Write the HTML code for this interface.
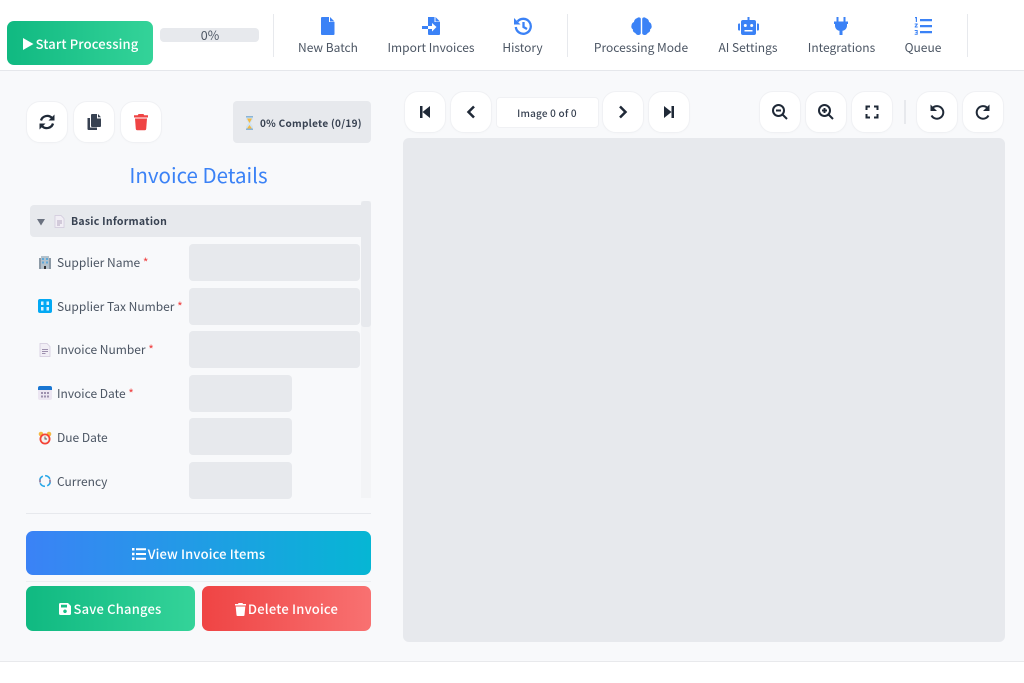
<!DOCTYPE html>
<html><head><meta charset="utf-8"><style>
html,body{margin:0;padding:0;width:1024px;height:683px;overflow:hidden;background:#fff}
body{position:relative;font-family:"Noto Sans CJK JP","Liberation Sans",sans-serif;color:#4b5563}
.a{position:absolute}
.t{position:absolute;white-space:nowrap;line-height:16px}
.c{transform:translateX(-50%)}
.g{background:#e7e9ed}
.ib{position:absolute;width:40px;height:40px;background:#fff;border:1px solid #f0f1f4;border-radius:14px;box-shadow:0 1px 2px rgba(0,0,0,.015)}
.ib svg{position:absolute;left:11px;top:11px;width:18px;height:18px}
.nav{position:absolute;top:17px;width:18px;height:18px;fill:#3b82f6}
.nt{position:absolute;top:39.500px;font-size:12px;color:#4b5563;transform:translateX(-50%);white-space:nowrap;line-height:16px}
.btn{position:absolute;color:#fff;font-weight:500;font-size:13px;text-align:center;border-radius:7px;letter-spacing:.2px}
.lb{position:absolute;left:57px;font-size:12px;line-height:16px;white-space:nowrap;color:#4b5563}
.lb i{color:#ef4444;font-style:normal}
.em{position:absolute;left:38px;width:14px;height:14px}
.in{position:absolute;left:189px;background:#e7e9ed;border-radius:4px;height:37px}
</style></head><body>
<div class="a" style="left:0;top:70px;width:1024px;height:1px;background:#e5e7eb"></div>
<div class="a" style="left:0;top:71px;width:1024px;height:590px;background:#f8f9fb"></div>
<div class="a" style="left:0;top:661px;width:1024px;height:1px;background:#e8e9ec"></div>

<div class="btn" style="left:7px;top:21px;width:146px;height:44px;line-height:46px;letter-spacing:.15px;background:linear-gradient(90deg,#10b981,#34d399)"><svg style="width:12px;height:14px;vertical-align:-2px;margin-right:2px" viewBox="0 0 12 14"><path d="M1 1v12l10.500-6z" fill="#fff"/></svg>Start Processing</div>
<div class="a g" style="left:160px;top:28px;width:99px;height:14px;border-radius:4px"></div>
<div class="t c" style="left:210px;top:27px;font-size:12.500px;color:#4b5563">0%</div>
<div class="a g" style="left:273px;top:14px;width:1px;height:43px"></div>
<div class="a g" style="left:567px;top:14px;width:1px;height:43px"></div>
<div class="a g" style="left:967px;top:14px;width:1px;height:43px"></div>

<svg class="nav" style="left:319px" viewBox="0 0 18 18"><path d="M3 0h7v5h5.500v12a1 1 0 0 1-1 1H3a1 1 0 0 1-1-1V1a1 1 0 0 1 1-1zM11 0l4.500 4.500H11z"/></svg>
<div class="nt" style="left:328px">New Batch</div>
<svg class="nav" style="left:422px" viewBox="0 0 18 18"><path d="M6 0h6.500v5H18v12a1 1 0 0 1-1 1H7a1 1 0 0 1-1-1v-5h4v2.500L14.500 10 10 6v3H6zM13.500 0L18 4.500h-4.500z M0 9h6v3H0z"/><path d="M7 9.500h4v-2l3 2.500-3 2.500v-2H7z" fill="#fff"/></svg>
<div class="nt" style="left:431px">Import Invoices</div>
<svg class="nav" style="left:514px;fill:none;stroke:#3b82f6;stroke-width:2.300" viewBox="0 0 18 18"><path d="M3.500 4.500A7.500 7.500 0 1 1 1.800 10M9.500 5v5l3.500 2"/><path d="M0 1v6.500h6.500z" fill="#3b82f6" stroke="none"/></svg>
<div class="nt" style="left:522.500px">History</div>
<svg class="nav" style="left:630.500px;width:21px" viewBox="0 0 21 18"><path d="M9.800 2v14c0 1.500-1.500 2-2.500 2-1.500 0-2.500-1-3-2C2.500 15.500 1.500 14 2 12.500 .5 11.500 0 10 .5 8.500 .5 7 1.500 5.500 3 5 3 3 4.500 1.500 6 1.200 7 0 9.800 0 9.800 2zM11.200 2v14c0 1.500 1.500 2 2.500 2 1.500 0 2.500-1 3-2 1.800-.5 2.800-2 2.300-3.500 1.500-1 2-2.500 1.500-4 0-1.500-1-3-2.500-3.500 0-2-1.500-3.500-3-3.800-1-1.200-3.800-1.200-3.800.8z"/></svg>
<div class="nt" style="left:641px">Processing Mode</div>
<svg class="nav" style="left:738px;width:21px" viewBox="0 0 21 18"><path d="M9.500 0h2v3h4.500a2 2 0 0 1 2 2v11a2 2 0 0 1-2 2H5a2 2 0 0 1-2-2V5a2 2 0 0 1 2-2h4.500zM0 7.500a1 1 0 0 1 1-1h1v7H1a1 1 0 0 1-1-1zM19 6.500h1a1 1 0 0 1 1 1v5a1 1 0 0 1-1 1h-1z"/><circle cx="7.300" cy="8.500" r="1.500" fill="#fff"/><circle cx="13.700" cy="8.500" r="1.500" fill="#fff"/><path d="M6.500 13h8v1.500h-8z" fill="#fff"/></svg>
<div class="nt" style="left:748px">AI Settings</div>
<svg class="nav" style="left:832px" viewBox="0 0 18 18"><path d="M4.500 0h2v4.500h5V0h2v4.500H16V7h-1v1.500c0 3-2 5-4.500 5.300V18h-3v-4.200C5 13.500 3 11.500 3 8.500V7H2V4.500h2.500z"/></svg>
<div class="nt" style="left:841.500px">Integrations</div>
<svg class="nav" style="left:914px" viewBox="0 0 18 18"><path d="M6 2h12v2.300H6zM6 8h12v2.300H6zM6 14h12v2.300H6z"/><path d="M1 0h2v5H1.800V1.300H1zM.7 6.500h3v1L2 9.500h1.700v1H.7v-1l1.700-2H.7zM.7 13h3v4.800h-3v-1h2v-.9H1.500v-1h1.200V14h-2z"/></svg>
<div class="nt" style="left:923px">Queue</div>

<div class="ib" style="left:26px;top:101px"><svg viewBox="0 0 18 18" fill="none" stroke="#1f2937" stroke-width="2.300"><path d="M3 7.500a6.500 6.500 0 0 1 11-2.500M15 10.500a6.500 6.500 0 0 1-11 2.500"/><path d="M16.500 1.500v6h-6zM1.500 16.500v-6h6z" fill="#1f2937" stroke="none"/></svg></div>
<div class="ib" style="left:73px;top:101px"><svg viewBox="0 0 18 18" fill="#374151"><path d="M7 1h5v4.500h4V13a1 1 0 0 1-1 1H7a1 1 0 0 1-1-1V2a1 1 0 0 1 1-1zM13 1l3 3.300h-3z"/><path d="M2.500 5H5v9.500h7V17H3.500a1 1 0 0 1-1-1z"/></svg></div>
<div class="ib" style="left:120px;top:101px"><svg viewBox="0 0 18 18" fill="#ef4444"><path d="M6.500 1h5l.7 1.300H16V4.500H2V2.300h3.800zM3 5.500h12L14.200 16a1.500 1.500 0 0 1-1.500 1.300H5.300A1.500 1.500 0 0 1 3.800 16z"/></svg></div>
<div class="a g" style="left:233px;top:101px;width:138px;height:42px;border-radius:4px"></div>
<svg class="a" style="left:244px;top:116px;width:11px;height:14px" viewBox="0 0 11 14"><path d="M2 1h7v2L6.500 7 9 11v2H2v-2l2.500-4L2 3z" fill="#cfe3f2"/><path d="M3 2.500h5L5.500 7zM3 12.500l2.500-3.500 2.500 3.500z" fill="#f4b942"/><path d="M2 0h7v1.500H2zM2 12.500h7V14H2z" fill="#8ab4d6"/></svg>
<div class="t" style="left:260px;top:115px;font-size:10px;font-weight:700;color:#374151;letter-spacing:.28px">0% Complete (0/19)</div>

<div class="ib" style="left:404px;top:91px"><svg viewBox="0 0 18 18" fill="#1f2937"><path d="M4 3h2.500v12H4zM14 3v12L6.500 9z"/></svg></div>
<div class="ib" style="left:450px;top:91px"><svg viewBox="0 0 18 18" fill="none" stroke="#1f2937" stroke-width="2.500"><path d="M12 3.500L6.500 9l5.500 5.500"/></svg></div>
<div class="a" style="left:496px;top:97px;width:101px;height:29px;background:#fff;border:1px solid #f0f1f4;border-radius:4px"></div>
<div class="t c" style="left:547px;top:105px;font-size:10px;font-weight:500;color:#374151;letter-spacing:.2px">Image 0 of 0</div>
<div class="ib" style="left:602px;top:91px"><svg viewBox="0 0 18 18" fill="none" stroke="#1f2937" stroke-width="2.500"><path d="M6 3.500L11.500 9 6 14.500"/></svg></div>
<div class="ib" style="left:648px;top:91px"><svg viewBox="0 0 18 18" fill="#1f2937"><path d="M14 3h-2.500v12H14zM4 3v12l7.500-6z"/></svg></div>
<div class="ib" style="left:759px;top:91px"><svg viewBox="0 0 18 18" fill="none" stroke="#1f2937" stroke-width="2"><circle cx="7.500" cy="7.500" r="5.500"/><path d="M11.500 11.500L16 16M5 7.500h5"/></svg></div>
<div class="ib" style="left:805px;top:91px"><svg viewBox="0 0 18 18" fill="none" stroke="#1f2937" stroke-width="2"><circle cx="7.500" cy="7.500" r="5.500"/><path d="M11.500 11.500L16 16M5 7.500h5M7.500 5v5"/></svg></div>
<div class="ib" style="left:851px;top:91px"><svg viewBox="0 0 18 18" fill="none" stroke="#1f2937" stroke-width="2"><path d="M3.500 7V3.500H7M11 3.500h3.500V7M14.500 11v3.500H11M7 14.500H3.500V11"/></svg></div>
<div class="a" style="left:904px;top:100px;width:2px;height:24px;background:#e7e9ed"></div>
<div class="ib" style="left:916px;top:91px"><svg viewBox="0 0 18 18" fill="none" stroke="#1f2937" stroke-width="2"><path d="M4.500 5A6.300 6.300 0 1 1 3.500 12.500"/><path d="M2.500 1.500v6.500h6.500z" fill="#1f2937" stroke="none"/></svg></div>
<div class="ib" style="left:962px;top:91px"><svg viewBox="0 0 18 18" fill="none" stroke="#1f2937" stroke-width="2"><path d="M13.500 5A6.300 6.300 0 1 0 14.500 12.500"/><path d="M15.500 1.500v6.500H9z" fill="#1f2937" stroke="none"/></svg></div>
<div class="a g" style="left:403px;top:138px;width:602px;height:504px;border-radius:6px"></div>

<div class="t c" style="left:198.500px;top:162px;font-size:20.500px;line-height:25px;color:#3b82f6">Invoice Details</div>
<div class="a g" style="left:30px;top:205px;width:331px;height:32px;border-radius:4px 0 0 4px"></div>
<div class="a" style="left:361px;top:201px;width:10px;height:297px;background:#f3f4f6"></div>
<div class="a g" style="left:361px;top:201px;width:10px;height:126px;border-radius:3px"></div>
<svg class="a" style="left:37px;top:218px;width:8px;height:8px" viewBox="0 0 8 8"><path d="M0 1h8L4 7.500z" fill="#6b7280"/></svg>
<svg class="a" style="left:54px;top:215px;width:11px;height:13px" viewBox="0 0 11 13"><path d="M1 .5h6l3 3V12.500H1z" fill="#f1eef5" stroke="#cfc7da" stroke-width=".7"/><path d="M3 6h5M3 8h5M3 10h3" stroke="#9d90ae" stroke-width=".8"/></svg>
<div class="t" style="left:71px;top:214px;font-size:10.500px;font-weight:700;color:#374151;letter-spacing:.25px">Basic Information</div>

<svg class="em" style="top:255px" viewBox="0 0 14 14"><path d="M1 3h12v11H1z" fill="#8d9aa6"/><path d="M3 1h8v13H3z" fill="#b4c2cc"/><path d="M4 3h2v2H4zM8 3h2v2H8zM4 6.500h2v2H4zM8 6.500h2v2H8z" fill="#5fa8d8"/><path d="M6 11h2v3H6z" fill="#333"/></svg>
<div class="lb" style="top:255px">Supplier Name <i>*</i></div>
<div class="in" style="top:244px;width:171px"></div>
<svg class="em" style="top:299px" viewBox="0 0 14 14"><rect width="14" height="14" rx="2" fill="#03a9f4"/><path d="M3 2.500h2.500v3.500H3zM8.500 2.500H11v3.500H8.500zM3 8h2.500v3.500H3zM8.500 8H11v3.500H8.500z" fill="#fff" fill-opacity=".85"/></svg>
<div class="lb" style="top:299px">Supplier Tax Number <i>*</i></div>
<div class="in" style="top:288px;width:171px"></div>
<svg class="em" style="top:343px" viewBox="0 0 14 14"><path d="M2 .5h7l3 3V13.500H2z" fill="#f1eef5" stroke="#cfc7da" stroke-width=".7"/><path d="M4 6.500h6M4 8.500h6M4 10.500h3.500" stroke="#9d90ae" stroke-width=".9"/></svg>
<div class="lb" style="top:342px">Invoice Number <i>*</i></div>
<div class="in" style="top:331px;width:171px"></div>
<svg class="em" style="top:386px" viewBox="0 0 14 14"><rect y="1" width="14" height="13" rx="2" fill="#ece6f2"/><path d="M2 0h10a2 2 0 0 1 2 2v2H0V2a2 2 0 0 1 2-2z" fill="#1976d2"/><path d="M3 6h2v2H3zM6 6h2v2H6zM9 6h2v2H9zM3 9.500h2v2H3zM6 9.500h2v2H6zM9 9.500h2v2H9z" fill="#9d90ae"/></svg>
<div class="lb" style="top:386px">Invoice Date <i>*</i></div>
<div class="in" style="top:375px;width:103px"></div>
<svg class="em" style="top:431px" viewBox="0 0 14 14"><circle cx="3" cy="3" r="2.300" fill="#f4b942"/><circle cx="11" cy="3" r="2.300" fill="#f4b942"/><circle cx="7" cy="8" r="5.500" fill="#f44336"/><circle cx="7" cy="8" r="3.700" fill="#f5f1ee"/><path d="M7 5.500V8h2" stroke="#555" fill="none" stroke-width=".9"/></svg>
<div class="lb" style="top:430px">Due Date</div>
<div class="in" style="top:418px;width:103px"></div>
<svg class="em" style="top:474px" viewBox="0 0 14 14"><circle cx="7" cy="7" r="5.300" fill="none" stroke="#29a8e8" stroke-width="1.600" stroke-dasharray="6 2.300"/><path d="M1 5.500h2v3H1zM11 5.500h2v3h-2z" fill="#9d90ae"/></svg>
<div class="lb" style="top:474px">Currency</div>
<div class="in" style="top:462px;width:103px"></div>

<div class="a g" style="left:26px;top:512.500px;width:345px;height:1px"></div>
<div class="btn" style="left:26px;top:531px;width:345px;height:44px;line-height:45px;letter-spacing:.15px;background:linear-gradient(90deg,#3b82f6,#06b6d4)"><svg style="width:14px;height:12px;vertical-align:-1px;margin-right:2px" viewBox="0 0 14 12" fill="#fff"><path d="M0 0h2.500v2.500H0zM4 .2h10v2H4zM0 4.700h2.500v2.500H0zM4 5h10v2H4zM0 9.400h2.500V12H0zM4 9.800h10v2H4z"/></svg>View Invoice Items</div>
<div class="a" style="left:26px;top:580.500px;width:345px;height:1.500px;background:#eceef1"></div>
<div class="btn" style="left:26px;top:586px;width:169px;height:45px;line-height:45px;background:linear-gradient(90deg,#10b981,#34d399)"><svg style="width:12px;height:12px;vertical-align:-1px;margin-right:2px" viewBox="0 0 12 12" fill="#fff"><path fill-rule="evenodd" d="M1.500 0h7.500L12 3v7.500a1.500 1.500 0 0 1-1.500 1.500h-9A1.500 1.500 0 0 1 0 10.500v-9A1.500 1.500 0 0 1 1.500 0zM2 1.700v2.800h6V1.700zM6 6.500a1.800 1.800 0 1 0 .01 0z"/></svg>Save Changes</div>
<div class="btn" style="left:202px;top:586px;width:169px;height:45px;line-height:45px;background:linear-gradient(90deg,#ef4444,#f87171)"><svg style="width:11px;height:13px;vertical-align:-2px;margin-right:2px" viewBox="0 0 11 13" fill="#fff"><path d="M3.500 0h4l.5 1h3v1.500H0V1h3zM.7 3.500h9.600L9.500 12a1 1 0 0 1-1 1h-6a1 1 0 0 1-1-1z"/></svg>Delete Invoice</div>
</body></html>
